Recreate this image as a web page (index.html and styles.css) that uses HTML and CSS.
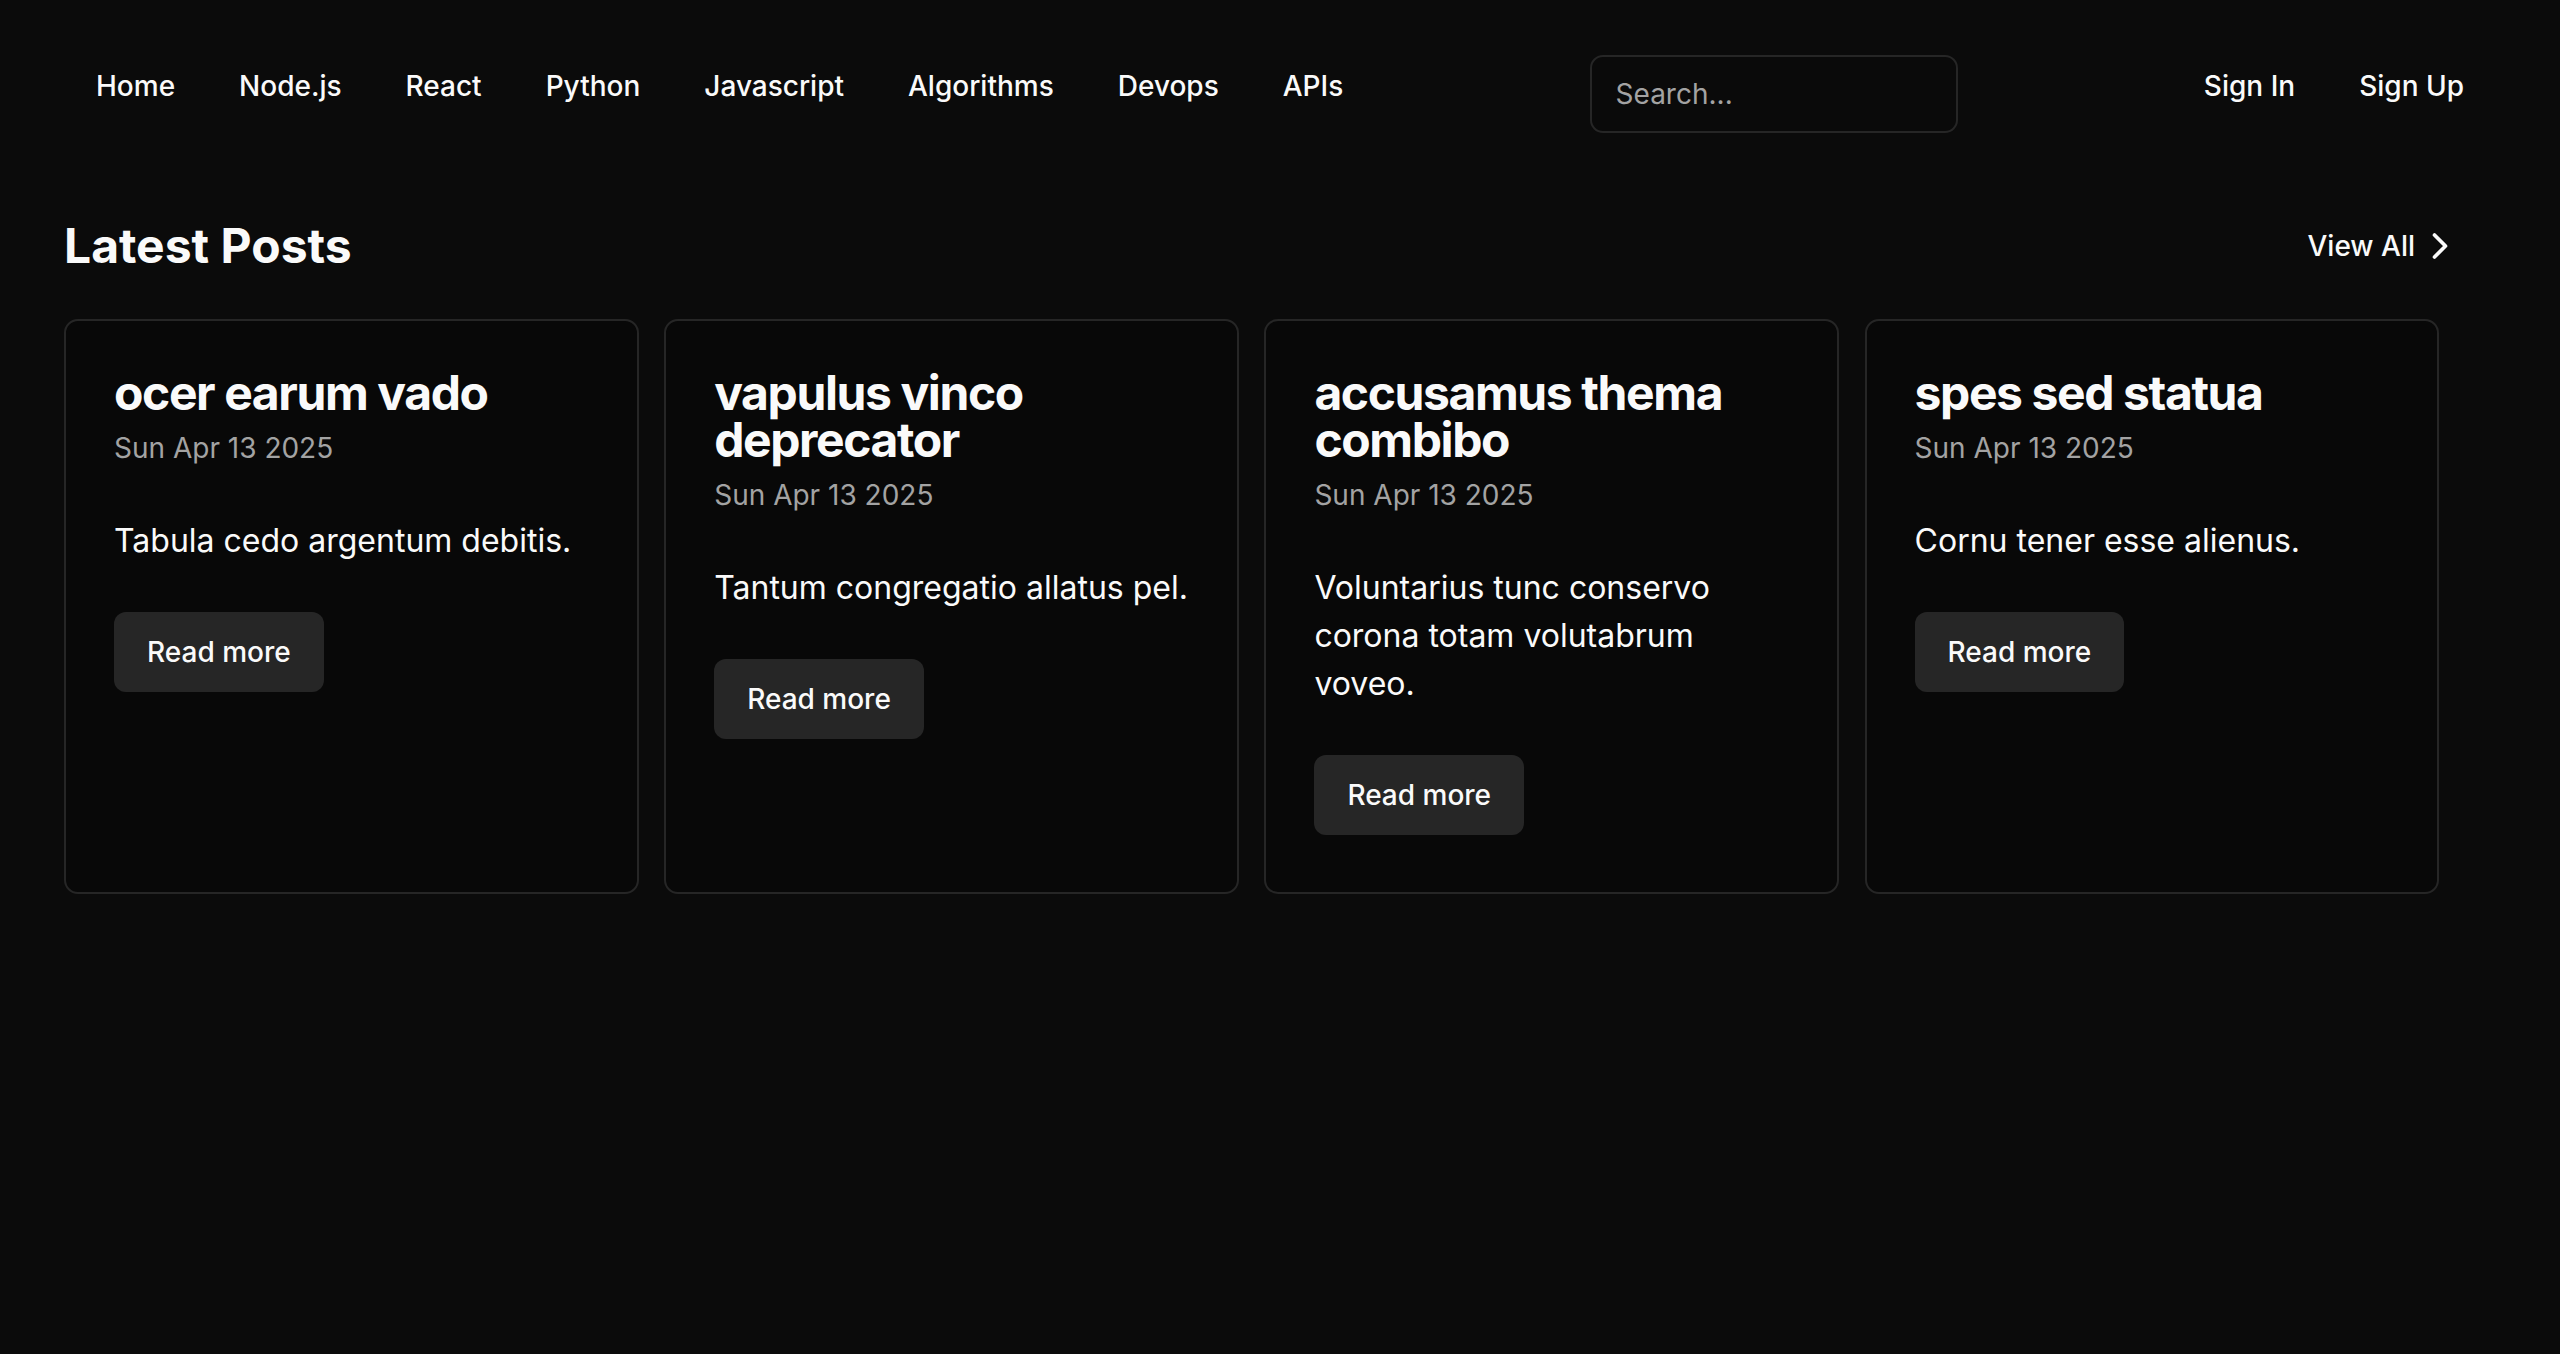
FILE: index.html
```html
<!DOCTYPE html>
<html lang="en">
<head>
<meta charset="utf-8">
<title>Latest Posts</title>
<link rel="stylesheet" href="styles.css">
</head>
<body>
<header class="topbar">
  <nav class="links">
    <a href="#">Home</a>
    <a href="#">Node.js</a>
    <a href="#">React</a>
    <a href="#">Python</a>
    <a href="#">Javascript</a>
    <a href="#">Algorithms</a>
    <a href="#">Devops</a>
    <a href="#">APIs</a>
  </nav>
  <input class="search" type="text" placeholder="Search...">
  <nav class="links">
    <a href="#">Sign In</a>
    <a href="#">Sign Up</a>
  </nav>
</header>
<main class="posts">
  <div class="posts-head">
    <h2>Latest Posts</h2>
    <a class="view-all" href="#">View All
      <svg viewBox="0 0 24 24" fill="none" stroke="currentColor" stroke-width="2" stroke-linecap="round" stroke-linejoin="round"><path d="m9 18 6-6-6-6"/></svg>
    </a>
  </div>
  <div class="grid">
    <article class="card">
      <h3>ocer earum vado</h3>
      <p class="date">Sun Apr 13 2025</p>
      <p class="desc">Tabula cedo argentum debitis.</p>
      <a class="btn" href="#">Read more</a>
    </article>
    <article class="card">
      <h3>vapulus vinco deprecator</h3>
      <p class="date">Sun Apr 13 2025</p>
      <p class="desc">Tantum congregatio allatus pel.</p>
      <a class="btn" href="#">Read more</a>
    </article>
    <article class="card">
      <h3>accusamus thema combibo</h3>
      <p class="date">Sun Apr 13 2025</p>
      <p class="desc">Voluntarius tunc conservo corona totam volutabrum voveo.</p>
      <a class="btn" href="#">Read more</a>
    </article>
    <article class="card">
      <h3>spes sed statua</h3>
      <p class="date">Sun Apr 13 2025</p>
      <p class="desc">Cornu tener esse alienus.</p>
      <a class="btn" href="#">Read more</a>
    </article>
  </div>
</main>
</body>
</html>
```
FILE: styles.css
```css
* { box-sizing: border-box; }
html, body {
  margin: 0;
  background: #0b0b0b;
  color: #fafafa;
  font-family: Inter, "Noto Sans", sans-serif;
}
a { color: inherit; text-decoration: none; }

.topbar {
  display: flex;
  justify-content: space-between;
  align-items: flex-start;
  padding: 55px 64px 0;
}
.links {
  display: flex;
  padding-top: 10px;
}
.links a {
  padding: 0 32px;
  font-size: 28px;
  line-height: 42px;
  font-weight: 500;
}
.search {
  width: 368px;
  height: 78px;
  border: 2px solid #262626;
  border-radius: 13px;
  background: #0a0a0a;
  padding: 0 24px;
  font-family: inherit;
  font-size: 28px;
  color: #fafafa;
  outline: none;
}
.search::placeholder { color: #a3a3a3; }

.posts {
  padding: 81px 64px 0;
}
.posts-head {
  display: flex;
  justify-content: space-between;
  align-items: center;
  padding-right: 34px;
  margin-bottom: 42px;
}
.posts-head h2 {
  margin: 0;
  font-size: 48px;
  line-height: 63px;
  font-weight: 700;
}
.view-all {
  display: flex;
  align-items: center;
  gap: 3px;
  font-size: 28px;
  line-height: 42px;
  font-weight: 500;
}
.view-all svg {
  width: 44px;
  height: 44px;
}

.grid {
  display: grid;
  grid-template-columns: repeat(4, 574.5px);
  gap: 25.7px;
}
.card {
  aspect-ratio: 1 / 1;
  border: 2px solid #262626;
  border-radius: 14px;
  background: #080808;
  padding: 48px;
  display: flex;
  flex-direction: column;
  align-items: flex-start;
}
.card h3 {
  margin: 0;
  font-size: 48px;
  line-height: 47px;
  font-weight: 700;
  letter-spacing: -1.4px;
}
.date {
  margin: 11px 0 0;
  font-size: 28px;
  line-height: 42px;
  color: #a3a3a3;
}
.desc {
  margin: 48px 0 0;
  font-size: 32px;
  line-height: 48px;
}
.btn {
  margin-top: 46.5px;
  height: 80px;
  padding: 0 33px;
  display: flex;
  align-items: center;
  background: #262626;
  border-radius: 12px;
  font-size: 28px;
  font-weight: 500;
}
```
